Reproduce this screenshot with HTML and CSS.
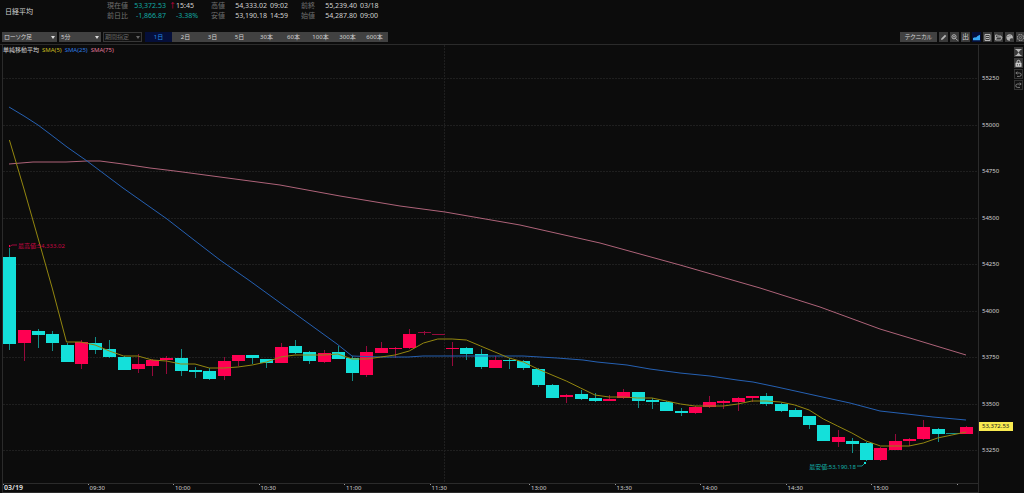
FILE: index.html
```
<!DOCTYPE html>
<html lang="ja">

<head>
	<meta charset="UTF-8">
	<meta name="viewport" content="width=device-width, initial-scale=1.0">
	<title>日経平均</title>
	<link rel="stylesheet" href="styles.css">
</head>

<body>
	<header>
		<h1>日経平均</h1>
		<div class="quotes">
			<div class="quote-group first">
				<span class="name">現在値</span><span class="value down">53,372.53</span><span class="extra"><i class="arrow">↑</i>15:45</span>
				<span class="name">前日比</span><span class="value down">-1,866.87</span><span class="extra percent down">-3.38%</span>
			</div>
			<div class="quote-group">
				<span class="name">高値</span><span class="value">54,333.02</span><span class="extra">09:02</span>
				<span class="name">安値</span><span class="value">53,190.18</span><span class="extra">14:59</span>
			</div>
			<div class="quote-group">
				<span class="name">前終</span><span class="value">55,239.40</span><span class="extra">03/18</span>
				<span class="name">始値</span><span class="value">54,287.80</span><span class="extra">09:00</span>
			</div>
		</div>
	</header>

	<div class="toolbar">
		<div class="select type">
			<select aria-label="チャート種類"><option>ローソク足</option></select>
		</div>
		<div class="select interval">
			<select aria-label="足種"><option>5分</option></select>
		</div>
		<div class="select period disabled">
			<select aria-label="期間指定" disabled><option>期間指定</option></select>
		</div>
		<div class="ranges">
			<button class="active">1日</button>
			<button>2日</button>
			<button>3日</button>
			<button>5日</button>
			<button>30本</button>
			<button>60本</button>
			<button>100本</button>
			<button>300本</button>
			<button>600本</button>
		</div>
		<div class="tools">
			<button class="technical">テクニカル</button>
			<button class="icon" aria-label="描画">
				<svg viewBox="0 0 9 9"><path d="M2 7l.5-1.8L6 1.7 7.3 3 3.8 6.5z" fill="#b5b5b5"/></svg>
			</button>
			<button class="icon" aria-label="拡大">
				<svg viewBox="0 0 9 9"><circle cx="4" cy="3.8" r="2.1" fill="none" stroke="#b5b5b5"/><path d="M3 3.8h2M5.6 5.4L7.8 7.6" stroke="#b5b5b5"/></svg>
			</button>
			<button class="icon volume" aria-label="出来高">出</button>
			<button class="icon active" aria-label="チャート">
				<svg viewBox="0 0 9 9"><path d="M1 7.2V5l2-.8 1 .4L5.5 3 8 1.8v5.4z" fill="#38a8f4"/></svg>
			</button>
			<button class="icon" aria-label="保存">
				<svg viewBox="0 0 9 9"><path d="M2 1.5h5v6H2z" fill="none" stroke="#b5b5b5"/><path d="M3 3.5h3M3 5.5h3" stroke="#b5b5b5"/></svg>
			</button>
			<button class="icon" aria-label="開く">
				<svg viewBox="0 0 9 9"><path d="M1.5 7V2h2l1 1H7v1M1.5 7l1.3-3H8L6.8 7z" fill="none" stroke="#b5b5b5" stroke-width=".9"/></svg>
			</button>
			<button class="icon" aria-label="配色">
				<svg viewBox="0 0 9 9"><path d="M4.5 1.2A3.3 3.3 0 1 0 5 7.8L4.8 6l1.5-.7 1.4.3A3.3 3.3 0 0 0 4.5 1.2z" fill="#b5b5b5"/><circle cx="3" cy="3.6" r=".5" fill="#444"/><circle cx="5" cy="2.8" r=".5" fill="#444"/></svg>
			</button>
			<button class="icon" aria-label="設定">
				<svg viewBox="0 0 9 9"><circle cx="4.5" cy="4.5" r="3" fill="none" stroke="#999" stroke-width="1.1" stroke-dasharray="1.6 .7"/><circle cx="4.5" cy="4.5" r="1.1" fill="none" stroke="#999" stroke-width=".7"/></svg>
			</button>
		</div>
	</div>

	<main class="chart">
		<div class="main-area">
			<div class="plot">
				<svg id="candles" viewBox="3 45 975 438" preserveAspectRatio="none"></svg>
				<div class="legend">
					<span>単純移動平均</span>
					<span class="sma5">SMA(5)</span>
					<span class="sma25">SMA(25)</span>
					<span class="sma75">SMA(75)</span>
				</div>
				<span class="note high">最高値:54,333.02</span>
				<span class="note low">最安値:53,190.18</span>
			</div>
			<div class="time-axis">
				<span class="date">03/19</span>
				<span>09:30</span>
				<span>10:00</span>
				<span>10:30</span>
				<span>11:00</span>
				<span class="lunch">11:30</span>
				<span>13:00</span>
				<span>13:30</span>
				<span>14:00</span>
				<span>14:30</span>
				<span>15:00</span>
				<span class="close"></span>
			</div>
		</div>
		<div class="price-axis">
			<div class="prices">
				<span>55250</span>
				<span>55000</span>
				<span>54750</span>
				<span>54500</span>
				<span>54250</span>
				<span>54000</span>
				<span>53750</span>
				<span>53500</span>
				<span>53250</span>
				<strong class="last-price">53,372.53</strong>
			</div>
		</div>
		<div class="side-tools">
			<button class="icon" aria-label="上下調整">
				<svg viewBox="0 0 9 9"><path d="M1.5 1.5h6M1.5 7.5h6" stroke="#b5b5b5"/><path d="M2.5 2h4l-2 2.4zM2.5 7h4l-2-2.4z" fill="#b5b5b5"/></svg>
			</button>
			<button class="icon" aria-label="固定">
				<svg viewBox="0 0 9 9"><path d="M3 4V2.8a1.5 1.5 0 0 1 3 0V4" fill="none" stroke="#ccc"/><path d="M1.5 3.8h6v4h-6z" fill="#ccc"/><path d="M3.4 5v1.6M5.6 5v1.6" stroke="#444" stroke-width=".8"/></svg>
			</button>
			<button class="icon outline" aria-label="元に戻す">
				<svg viewBox="0 0 9 9"><path d="M2 3h3.5a1.6 1.6 0 0 1 0 3.4H3M3.2 1.6L1.8 3l1.4 1.4" fill="none" stroke="#888" stroke-width=".9"/></svg>
			</button>
			<button class="icon outline" aria-label="やり直す">
				<svg viewBox="0 0 9 9"><path d="M7 3H3.5a1.6 1.6 0 0 0 0 3.4H6M5.8 1.6L7.2 3 5.8 4.4" fill="none" stroke="#888" stroke-width=".9"/></svg>
			</button>
		</div>
	</main>

	<script src="chart.js"></script>
</body>

</html>
```
FILE: styles.css
```
* {
	margin: 0;
	padding: 0;
	box-sizing: border-box;
}

body {
	display: flex;
	flex-direction: column;
	height: 100vh;
	overflow: hidden;
	background-color: #0c0c0c;
	color: #d2d2d2;
	font-family: "Noto Sans", "Noto Sans CJK JP", sans-serif;
	font-size: 6px;
	line-height: 8px;
}

button,
select {
	font: inherit;
	color: inherit;
	border: none;
	cursor: pointer;
}

/* Header */
header {
	display: flex;
	height: 32px;
	font-size: 7px;
	line-height: 10px;
	white-space: nowrap;
}

h1 {
	width: 107px;
	padding: 7px 0 0 5px;
	font-size: 7px;
	font-weight: normal;
}

.quotes {
	display: flex;
	gap: 12px;
	padding-top: 1px;
}

.quote-group {
	display: grid;
	grid-template-columns: 20px 34px 20px;
	grid-auto-rows: 10px;
	column-gap: 2px;
}

.quote-group.first {
	grid-template-columns: 25px 32px 31px;
}

.name {
	color: #707070;
}

.value {
	text-align: right;
}

.extra {
	padding-left: 1px;
}

.first .percent {
	padding-left: 8px;
}

.arrow {
	display: inline-block;
	width: 7px;
	color: #e0004a;
	font-style: normal;
}

.down {
	color: #12a8a2;
}

/* Toolbar */
.toolbar {
	display: flex;
	gap: 2px;
	height: 12px;
	padding-left: 2px;
}

.select {
	position: relative;
	height: 10px;
}

.select::after {
	content: "";
	position: absolute;
	right: 2px;
	top: 4px;
	border: 2px solid transparent;
	border-top: 3px solid #ddd;
	border-bottom: none;
	pointer-events: none;
}

.select select {
	display: block;
	appearance: none;
	width: 100%;
	height: 10px;
	padding: 0 2px;
	background-color: #414141;
	line-height: 10px;
	font-feature-settings: "palt";
}

.type {
	width: 55px;
}

.interval {
	width: 42px;
}

.period {
	width: 39px;
}

.select.disabled select {
	background-color: #111;
	border: 1px solid #383838;
	color: #666;
	opacity: 1;
	padding: 0 1px;
	line-height: 8px;
}

.select.disabled::after {
	border-top-color: #666;
}

.ranges {
	display: flex;
	height: 10px;
	margin-left: 1px;
}

.ranges button {
	width: 27px;
	background-color: #414141;
	line-height: 10px;
}

.ranges .active {
	background-color: #050f3a;
	color: #2590e8;
}

.tools {
	display: flex;
	gap: 2px;
	margin-left: auto;
	margin-right: -1px;
}

.technical {
	width: 37px;
	height: 10px;
	background-color: #414141;
	line-height: 10px;
	font-feature-settings: "palt";
}

.icon {
	width: 9px;
	height: 10px;
	background-color: #3a3a3a;
	text-align: center;
}

.icon svg {
	display: block;
	width: 9px;
	height: 9px;
}

.icon.volume {
	font-size: 7px;
	line-height: 10px;
}

.icon.active {
	background-color: #050f3a;
}

.icon.outline {
	background-color: #111;
	outline: 1px solid #333;
	outline-offset: -1px;
}

/* Chart */
.chart {
	flex: 1;
	display: flex;
	min-height: 0;
	border-top: 1px solid #2b2b2b;
}

.main-area {
	flex: 1;
	display: flex;
	flex-direction: column;
	margin-left: 2px;
	border-left: 1px solid #2b2b2b;
	border-bottom: 1px solid #2b2b2b;
}

.plot {
	flex: 1;
	position: relative;
	min-height: 0;
}

.plot svg {
	position: absolute;
	width: 100%;
	height: 100%;
}

.grid {
	stroke: #1f1f1f;
	stroke-dasharray: 2 1;
}

.up-body {
	fill: #ff0052;
}

.down-body {
	fill: #14e0da;
}

.up-wick {
	stroke: #960a3c;
}

.down-wick {
	stroke: #128e8a;
}

.line {
	fill: none;
	stroke-width: 1;
}

.line.sma5 {
	stroke: #93860f;
}

.line.sma25 {
	stroke: #2560b2;
}

.line.sma75 {
	stroke: #ae6379;
}

.leader {
	fill: none;
}

.leader.high {
	stroke: #a0083c;
}

.leader.low {
	stroke: #128e8a;
}

.legend {
	position: absolute;
	top: 1px;
	left: 0;
	display: flex;
	gap: 3px;
}

.legend .sma5 {
	color: #c9bd20;
}

.legend .sma25 {
	color: #2e7be0;
}

.legend .sma75 {
	color: #e0789a;
}

.note {
	position: absolute;
	white-space: nowrap;
}

.note.high {
	top: 45%;
	left: 15px;
	color: #c80644;
}

.note.low {
	bottom: 12px;
	right: 122px;
	color: #12b0aa;
}

.time-axis {
	display: flex;
	height: 9px;
	border-top: 1px solid #2b2b2b;
}

.time-axis span {
	flex: 60 1 0;
	position: relative;
	padding-left: 2px;
}

.time-axis span::before {
	content: "";
	position: absolute;
	left: 0;
	top: 0;
	width: 1px;
	height: 1px;
	background-color: #999;
}

.time-axis .date {
	padding-left: 1px;
	font-size: 7px;
	font-weight: bold;
}

.time-axis .lunch {
	flex-grow: 70;
}

.time-axis .close {
	flex-grow: 14;
}

.price-axis {
	width: 35px;
	padding-bottom: 10px;
	border-left: 1px solid #2b2b2b;
}

.prices {
	position: relative;
	display: grid;
	grid-template-rows: 20fr repeat(9, 93fr) 19fr;
	align-items: center;
	height: 100%;
}

/* fills the margin row above the first price */
.prices::before {
	content: "";
}

.prices span {
	padding-left: 3px;
}

.last-price {
	position: absolute;
	top: 86%;
	left: 0;
	width: 100%;
	height: 9px;
	padding-left: 3px;
	background-color: #f8ea50;
	color: #222;
	font-weight: normal;
	line-height: 9px;
}

.side-tools {
	display: flex;
	flex-direction: column;
	gap: 1px;
	width: 11px;
	padding: 2px 0 0 1px;
}
```
FILE: chart.js
```
// bar positions on the plot: [body top, body bottom, wick top, wick bottom, rising]
var bars = [
	[257, 344, 248, 350, 0], [330, 343, 330, 361, 1], [331, 335, 329, 348, 0],
	[334, 343, 331, 351, 0], [345, 362, 343, 362, 0], [342, 364, 340, 369, 1],
	[343, 350, 337, 354, 0], [349, 357, 340, 358, 0], [357, 370, 356, 370, 0],
	[364, 369, 354, 373, 1], [360, 366, 359, 376, 1], [358, 360, 356, 374, 1],
	[358, 371, 349, 376, 0], [370, 372, 367, 378, 0], [371, 379, 368, 380, 0],
	[361, 376, 357, 380, 1], [355, 361, 355, 366, 1], [355, 358, 355, 364, 0],
	[359, 363, 359, 368, 0], [347, 363, 343, 363, 1], [346, 353, 340, 354, 0],
	[352, 361, 351, 364, 0], [353, 362, 350, 363, 1], [352, 359, 346, 359, 0],
	[358, 373, 356, 381, 0], [352, 375, 346, 377, 1], [348, 353, 342, 353, 1],
	[348, 349, 347, 358, 1], [334, 348, 329, 349, 1], [332, 333, 331, 335, 1],
	[334, 335, 334, 335, 1], [348, 349, 342, 366, 1], [348, 354, 347, 360, 0],
	[354, 367, 349, 369, 0], [360, 368, 356, 368, 1], [360, 361, 358, 369, 0],
	[361, 368, 360, 370, 0], [369, 385, 368, 387, 0], [385, 398, 384, 398, 0],
	[395, 397, 394, 403, 1], [394, 399, 390, 400, 0], [398, 401, 393, 402, 0],
	[399, 401, 395, 401, 1], [392, 398, 389, 399, 1], [392, 401, 392, 408, 0],
	[400, 402, 398, 409, 0], [402, 411, 401, 411, 0], [411, 413, 408, 416, 0],
	[407, 413, 406, 414, 1], [402, 407, 396, 408, 1], [401, 403, 400, 409, 1],
	[398, 402, 397, 411, 1], [396, 398, 396, 402, 1], [396, 404, 393, 406, 0],
	[404, 411, 403, 412, 0], [410, 417, 408, 417, 0], [416, 425, 416, 429, 0],
	[425, 441, 425, 441, 0], [437, 442, 430, 447, 1], [441, 444, 438, 453, 0],
	[443, 460, 442, 461, 0], [448, 460, 447, 461, 1], [441, 450, 434, 450, 1],
	[439, 441, 438, 446, 1], [427, 439, 420, 440, 1], [429, 434, 428, 442, 0],
	[433, 434, 433, 434, 0], [427, 434, 426, 434, 1]
];

// one value per bar
var sma5 = [
	140, 188, 238, 288, 342, 342, 345, 351, 356, 356, 360, 361, 364, 364, 368, 368, 367,
	365, 362, 357, 355, 355, 355, 354, 359, 359, 357, 355, 351, 343, 339, 339, 340, 346,
	352, 358, 362, 369, 375, 381, 388, 395, 397, 397, 398, 398, 401, 404, 406, 406, 406,
	404, 401, 401, 402, 405, 410, 419, 426, 433, 441, 446, 446, 446, 443, 438, 435, 432
];

// slow averages as x,y points
var sma25 = "9,107 24,116 38,125 50,134 67,147 87,161 123,188 167,219 194,240 220,260 " +
	"250,281 290,310 337,344 352,356 380,357 408,357 423,356 523,356 557,358 583,360 " +
	"597,362 627,365 650,369 680,373 710,376 737,380 753,382 777,387 827,398 850,403 " +
	"880,411 907,414 933,417 966,420";
var sma75 = "9,164 33,162 66,162 87,161 100,161 123,164 150,168 175,171 220,177 250,181 " +
	"280,185 340,196 400,206 445,212 520,225 600,243 680,265 760,288 820,307 880,329 " +
	"933,345 966,355";

var gridLines = [78, 125, 171, 218, 264, 311, 357, 404, 450];
var first = 9.4;
var step = 14.28;
var svg = document.getElementById("candles");

function add(name, className, attrs) {
	var el = document.createElementNS("http://www.w3.org/2000/svg", name);
	el.setAttribute("class", className);
	el.setAttribute("vector-effect", "non-scaling-stroke");
	for (var key in attrs) {
		el.setAttribute(key, attrs[key]);
	}
	svg.appendChild(el);
}

function addLine(className, x1, y1, x2, y2) {
	add("line", className, { x1: x1, y1: y1, x2: x2, y2: y2 });
}

gridLines.forEach(function (y) {
	addLine("grid", 3, y + 0.5, 978, y + 0.5);
});
// lunch break
addLine("grid", 444.5, 45, 444.5, 483);

bars.forEach(function (bar, i) {
	var x = Math.round(first + step * i);
	var dir = bar[4] ? "up" : "down";
	addLine(dir + "-wick", x + 0.5, bar[2], x + 0.5, bar[3]);
	// flat bars are drawn as a thin dark line
	var flat = i == 29 || i == 30 || i == 66;
	if (flat) {
		addLine(dir + "-wick", x - 6, bar[0] + 0.5, x + 7, bar[0] + 0.5);
	} else {
		add("rect", dir + "-body", { x: x - 6, y: bar[0], width: 13, height: bar[1] - bar[0] });
	}
});

add("polyline", "line sma75", { points: sma75 });
add("polyline", "line sma25", { points: sma25 });
add("polyline", "line sma5", {
	points: sma5.map(function (y, i) {
		return (first + step * i).toFixed(1) + "," + y;
	}).join(" ")
});

add("polyline", "leader high", { points: "9,247 12,245 17,245" });
add("rect", "up-body", { x: 9, y: 245, width: 1, height: 2 });
add("polyline", "leader low", { points: "857,466 862,466 865,463" });
add("rect", "down-body", { x: 864, y: 462, width: 2, height: 2 });
```
